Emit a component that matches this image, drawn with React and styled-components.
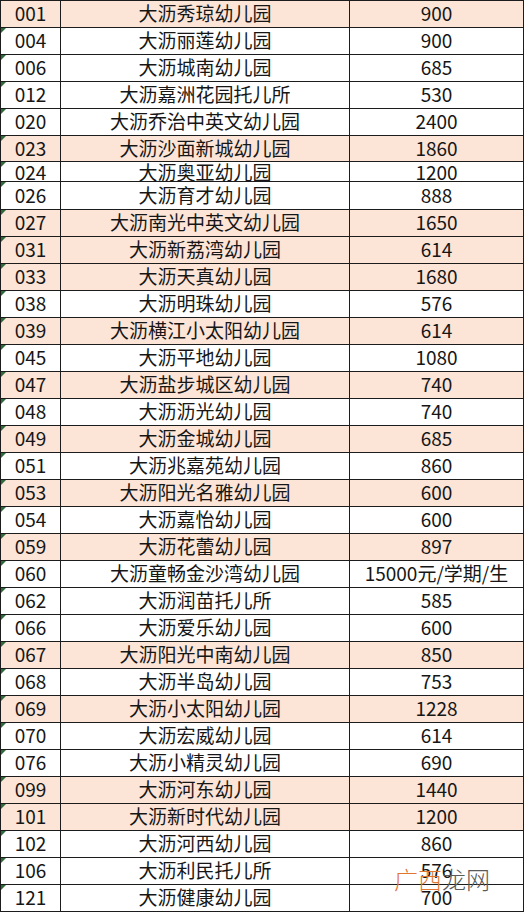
import React from "react";
import styled, { createGlobalStyle } from "styled-components";

const GlobalStyle = createGlobalStyle`
  html, body {
    margin: 0;
    padding: 0;
    background: #fff;
  }
  body {
    font-family: "Noto Sans CJK SC", "Noto Sans", sans-serif;
    color: #161616;
  }
`;

const rows = [
  { code: "001", name: "大沥秀琼幼儿园", fee: "900", hl: true },
  { code: "004", name: "大沥丽莲幼儿园", fee: "900" },
  { code: "006", name: "大沥城南幼儿园", fee: "685" },
  { code: "012", name: "大沥嘉洲花园托儿所", fee: "530" },
  { code: "020", name: "大沥乔治中英文幼儿园", fee: "2400" },
  { code: "023", name: "大沥沙面新城幼儿园", fee: "1860", hl: true, h: 26 },
  { code: "024", name: "大沥奥亚幼儿园", fee: "1200", h: 20 },
  { code: "026", name: "大沥育才幼儿园", fee: "888", h: 28 },
  { code: "027", name: "大沥南光中英文幼儿园", fee: "1650", hl: true },
  { code: "031", name: "大沥新荔湾幼儿园", fee: "614", hl: true },
  { code: "033", name: "大沥天真幼儿园", fee: "1680", hl: true },
  { code: "038", name: "大沥明珠幼儿园", fee: "576" },
  { code: "039", name: "大沥横江小太阳幼儿园", fee: "614", hl: true },
  { code: "045", name: "大沥平地幼儿园", fee: "1080" },
  { code: "047", name: "大沥盐步城区幼儿园", fee: "740", hl: true },
  { code: "048", name: "大沥沥光幼儿园", fee: "740" },
  { code: "049", name: "大沥金城幼儿园", fee: "685", hl: true },
  { code: "051", name: "大沥兆嘉苑幼儿园", fee: "860" },
  { code: "053", name: "大沥阳光名雅幼儿园", fee: "600", hl: true },
  { code: "054", name: "大沥嘉怡幼儿园", fee: "600" },
  { code: "059", name: "大沥花蕾幼儿园", fee: "897", hl: true },
  { code: "060", name: "大沥童畅金沙湾幼儿园", fee: "15000元/学期/生" },
  { code: "062", name: "大沥润苗托儿所", fee: "585" },
  { code: "066", name: "大沥爱乐幼儿园", fee: "600" },
  { code: "067", name: "大沥阳光中南幼儿园", fee: "850", hl: true },
  { code: "068", name: "大沥半岛幼儿园", fee: "753" },
  { code: "069", name: "大沥小太阳幼儿园", fee: "1228", hl: true },
  { code: "070", name: "大沥宏威幼儿园", fee: "614" },
  { code: "076", name: "大沥小精灵幼儿园", fee: "690" },
  { code: "099", name: "大沥河东幼儿园", fee: "1440", hl: true },
  { code: "101", name: "大沥新时代幼儿园", fee: "1200", hl: true },
  { code: "102", name: "大沥河西幼儿园", fee: "860" },
  { code: "106", name: "大沥利民托儿所", fee: "576" },
  { code: "121", name: "大沥健康幼儿园", fee: "700" },
];

const Sheet = styled.div`
  position: relative;
  width: 524px;
  box-sizing: border-box;
  border-top: 1px solid #1c1c1c;
  border-left: 1px solid #1c1c1c;
`;

const Row = styled.div`
  display: grid;
  grid-template-columns: 60px 289px 174px;
  height: ${(p) => p.$h}px;
  box-sizing: border-box;
  border-bottom: 1px solid #1c1c1c;
  background: ${(p) => (p.$hl ? "#fce4d6" : "#fff")};
`;

const Cell = styled.div`
  position: relative;
  display: flex;
  align-items: center;
  justify-content: center;
  box-sizing: border-box;
  padding-bottom: 3px;
  border-right: 1px solid #1c1c1c;
  font-size: 19px;
  line-height: 1;
  white-space: nowrap;
`;

// Excel 的 "以文本形式存储的数字" 小三角
const Marker = styled.span`
  position: absolute;
  top: 0;
  left: 0;
  width: 0;
  height: 0;
  border-top: 5px solid #2f6b3a;
  border-right: 5px solid transparent;
`;

const Watermark = styled.div`
  position: absolute;
  left: 393px;
  top: 866px;
  font-size: 24px;
  font-weight: 300;
  line-height: 1;
  white-space: nowrap;
`;

const Orange = styled.span`
  color: #e2762f;
`;

const Grey = styled.span`
  color: #5a5a5a;
`;

export default function App() {
  return (
    <>
      <GlobalStyle />
      <Sheet>
        {rows.map((r, i) => (
          <Row key={r.code} $h={r.h || 27} $hl={r.hl}>
            <Cell>
              {i > 0 && <Marker />}
              {r.code}
            </Cell>
            <Cell>{r.name}</Cell>
            <Cell>{r.fee}</Cell>
          </Row>
        ))}
        <Watermark>
          <Orange>广西</Orange>
          <Grey>龙网</Grey>
        </Watermark>
      </Sheet>
    </>
  );
}
